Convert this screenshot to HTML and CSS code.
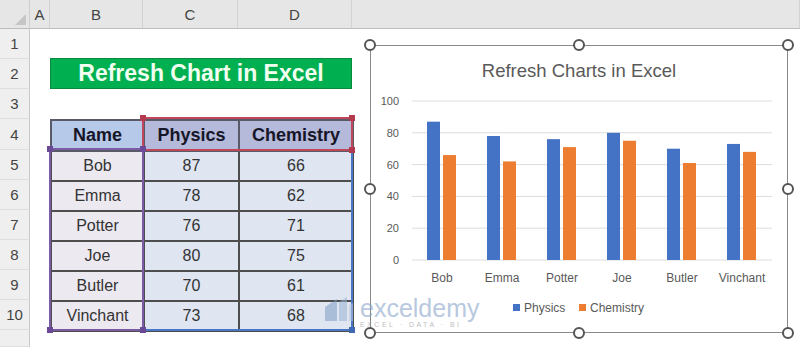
FILE: index.html
```html
<!doctype html>
<html lang="en">
<head>
    <meta charset="UTF-8">
    <meta name="viewport" content="width=device-width, initial-scale=1.0">
    <title>Refresh Chart in Excel</title>
    <link rel="stylesheet" href="styles.css">
</head>
<body>
<div class="sheet">
    <!-- column headers -->
    <div class="corner"></div>
    <div class="ch">A</div>
    <div class="ch">B</div>
    <div class="ch">C</div>
    <div class="ch">D</div>
    <div class="ch"></div>

    <!-- row headers -->
    <div class="rh">1</div>
    <div class="rh">2</div>
    <div class="rh">3</div>
    <div class="rh">4</div>
    <div class="rh">5</div>
    <div class="rh">6</div>
    <div class="rh">7</div>
    <div class="rh">8</div>
    <div class="rh">9</div>
    <div class="rh">10</div>
    <div class="rh"></div>

    <div class="title">Refresh Chart in Excel</div>

    <div class="data">
        <table>
            <colgroup><col class="c-b"><col class="c-c"><col class="c-d"></colgroup>
            <thead>
                <tr><th class="name">Name</th><th>Physics</th><th>Chemistry</th></tr>
            </thead>
            <tbody>
                <tr><td class="name">Bob</td><td>87</td><td>66</td></tr>
                <tr><td class="name">Emma</td><td>78</td><td>62</td></tr>
                <tr><td class="name">Potter</td><td>76</td><td>71</td></tr>
                <tr><td class="name">Joe</td><td>80</td><td>75</td></tr>
                <tr><td class="name">Butler</td><td>70</td><td>61</td></tr>
                <tr><td class="name">Vinchant</td><td>73</td><td>68</td></tr>
            </tbody>
        </table>
        <div class="sel sel-name"></div>
        <div class="sel sel-head"></div>
        <div class="sel sel-vals"></div>
        <span class="hd purple p1"></span>
        <span class="hd purple p2"></span>
        <span class="hd purple p3"></span>
        <span class="hd purple p4"></span>
        <span class="hd red r1"></span>
        <span class="hd red r2"></span>
        <span class="hd red r3"></span>
        <span class="hd blue b1"></span>
    </div>

    <div class="chart">
        <svg class="plot" width="418" height="288" viewBox="0 0 418 288">
            <text class="ctitle" x="209" y="32" text-anchor="middle">Refresh Charts in Excel</text>
            <g class="grid">
                <line x1="42" x2="402" y1="56" y2="56"/>
                <line x1="42" x2="402" y1="87.8" y2="87.8"/>
                <line x1="42" x2="402" y1="119.6" y2="119.6"/>
                <line x1="42" x2="402" y1="151.4" y2="151.4"/>
                <line x1="42" x2="402" y1="183.2" y2="183.2"/>
                <line x1="42" x2="402" y1="215" y2="215"/>
            </g>
            <g class="ylab" text-anchor="end">
                <text x="29" y="60">100</text>
                <text x="29" y="91.8">80</text>
                <text x="29" y="123.6">60</text>
                <text x="29" y="155.4">40</text>
                <text x="29" y="187.2">20</text>
                <text x="29" y="219">0</text>
            </g>
            <g class="phys">
                <rect x="57" y="76.67" width="13" height="138.33"/>
                <rect x="117" y="90.98" width="13" height="124.02"/>
                <rect x="177" y="94.16" width="13" height="120.84"/>
                <rect x="237" y="87.8" width="13" height="127.2"/>
                <rect x="297" y="103.7" width="13" height="111.3"/>
                <rect x="357" y="98.93" width="13" height="116.07"/>
            </g>
            <g class="chem">
                <rect x="73" y="110.06" width="13" height="104.94"/>
                <rect x="133" y="116.42" width="13" height="98.58"/>
                <rect x="193" y="102.11" width="13" height="112.89"/>
                <rect x="253" y="95.75" width="13" height="119.25"/>
                <rect x="313" y="118.01" width="13" height="96.99"/>
                <rect x="373" y="106.88" width="13" height="108.12"/>
            </g>
            <g class="xlab" text-anchor="middle">
                <text x="72" y="237">Bob</text>
                <text x="132" y="237">Emma</text>
                <text x="192" y="237">Potter</text>
                <text x="252" y="237">Joe</text>
                <text x="312" y="237">Butler</text>
                <text x="372" y="237">Vinchant</text>
            </g>
            <g class="legend">
                <rect class="phys" x="143" y="259" width="7" height="7"/>
                <text x="154" y="267">Physics</text>
                <rect class="chem" x="209" y="259" width="7" height="7"/>
                <text x="220" y="267">Chemistry</text>
            </g>
        </svg>
        <span class="knob k-tl"></span>
        <span class="knob k-tm"></span>
        <span class="knob k-tr"></span>
        <span class="knob k-ml"></span>
        <span class="knob k-mr"></span>
        <span class="knob k-bl"></span>
        <span class="knob k-bm"></span>
        <span class="knob k-br"></span>
    </div>

    <div class="mark">
        <svg width="30" height="26" viewBox="0 0 30 26">
            <path d="M1 25 L1 11 L13 3 L13 25 Z" fill="#7f9cc4"/>
            <path d="M15 25 L15 6 L23 1 L23 25 Z" fill="#9bb2d2"/>
            <path d="M25 25 L25 9 L29 7 L29 25 Z" fill="#b4c6de"/>
        </svg>
        <div class="mark-text">
            <div class="mark-name">exceldemy</div>
            <div class="mark-sub">EXCEL · DATA · BI</div>
        </div>
    </div>
</div>
</body>
</html>
```

FILE: styles.css
```css
* {
    box-sizing: border-box;
}
body {
    margin: 0;
    background: #fff;
    font-family: "Liberation Sans", Arial, sans-serif;
}
.sheet {
    position: relative;
    width: 800px;
    height: 347px;
    overflow: hidden;
    display: grid;
    grid-template-columns: 30px 20px 93px 95px 114px 1fr;
    grid-template-rows: 29px 30px 30px 30px 31px repeat(6, 30px) 1fr;
}

/* headers */
.corner {
    position: relative;
    background: #e6e6e6;
    border-right: 1px solid #cfcfcf;
    border-bottom: 1px solid #bdbdbd;
}
.corner::after {
    content: "";
    position: absolute;
    right: 3px;
    bottom: 3px;
    border-left: 11px solid transparent;
    border-bottom: 11px solid #c6c6c6;
}
.ch {
    background: #e6e6e6;
    border-right: 1px solid #d2d2d2;
    border-bottom: 1px solid #bdbdbd;
    display: flex;
    align-items: center;
    justify-content: center;
    font-size: 15px;
    color: #444;
}
.rh {
    grid-column: 1;
    background: #efefef;
    border-right: 1px solid #c8c8c8;
    border-bottom: 1px solid #dedede;
    display: flex;
    align-items: center;
    justify-content: center;
    font-size: 15px;
    color: #444;
}

/* title cell */
.title {
    grid-column: 3 / 6;
    grid-row: 3;
    margin-top: -1px;
    background: #00b050;
    border: 1px solid #0a8a3f;
    color: #f0fff0;
    font-size: 23px;
    font-weight: bold;
    display: flex;
    align-items: center;
    justify-content: center;
}

/* data table */
.data {
    grid-column: 3 / 6;
    grid-row: 5 / 12;
    position: relative;
}
.data table {
    width: 100%;
    height: 100%;
    border-collapse: collapse;
    table-layout: fixed;
}
.c-b { width: 93px; }
.c-c { width: 95px; }
.c-d { width: 114px; }
thead tr { height: 31px; }
tbody tr { height: 30px; }
th {
    font-size: 18px;
    font-weight: bold;
    color: #161628;
    background: #b5b9da;
    border: 2px solid #585a68;
    padding: 0;
}
th.name {
    background: #b6c9e8;
}
td {
    font-size: 16px;
    color: #333;
    text-align: center;
    background: #dfe6f2;
    border: 2px solid #4e4e4e;
    padding: 0;
}
td.name {
    background: #ece9f1;
}
.sel {
    position: absolute;
    pointer-events: none;
}
.sel-name {
    left: -1px;
    top: 29px;
    width: 95px;
    height: 183px;
    border: 2px solid #7b5aa6;
}
.sel-head {
    left: 92px;
    top: -2px;
    width: 211px;
    height: 34px;
    border: 2px solid #c0465a;
}
.sel-vals {
    left: 94px;
    top: 30px;
    width: 209px;
    height: 182px;
    border: 2px solid #4a76c6;
    border-left: none;
    border-top: none;
}
.hd {
    position: absolute;
    width: 6px;
    height: 6px;
    transform: translate(-50%, -50%);
}
.purple { background: #6a4a96; }
.red { background: #b23a4e; }
.blue { background: #3f68b4; }
.p1 { left: 0; top: 30px; }
.p2 { left: 93px; top: 30px; }
.p3 { left: 0; top: 211px; }
.p4 { left: 93px; top: 211px; }
.r1 { left: 93px; top: -1px; }
.r2 { left: 302px; top: -1px; }
.r3 { left: 302px; top: 31px; }
.b1 { left: 302px; top: 211px; }

/* chart */
.chart {
    position: absolute;
    left: 370px;
    top: 45px;
    width: 418px;
    height: 288px;
    background: #fff;
    outline: 1.5px solid #8a8a8a;
    outline-offset: -1px;
}
.plot {
    display: block;
    font-family: "Liberation Sans", Arial, sans-serif;
}
.ctitle {
    font-size: 18.5px;
    fill: #595959;
}
.grid line {
    stroke: #dcdcdc;
    stroke-width: 1;
}
.ylab text {
    font-size: 11px;
    fill: #595959;
}
.xlab text,
.legend text {
    font-size: 12px;
    fill: #595959;
}
.phys rect,
rect.phys {
    fill: #4472c4;
}
.chem rect,
rect.chem {
    fill: #ed7d31;
}
.knob {
    position: absolute;
    width: 12px;
    height: 12px;
    border: 2px solid #555;
    border-radius: 50%;
    background: #fff;
    transform: translate(-50%, -50%);
}
.k-tl { left: 0; top: 0; }
.k-tm { left: 50%; top: 0; }
.k-tr { left: 100%; top: 0; }
.k-ml { left: 0; top: 50%; }
.k-mr { left: 100%; top: 50%; }
.k-bl { left: 0; top: 100%; }
.k-bm { left: 50%; top: 100%; }
.k-br { left: 100%; top: 100%; }

/* watermark */
.mark {
    position: absolute;
    left: 324px;
    top: 296px;
    display: flex;
    align-items: flex-start;
    gap: 6px;
    opacity: 0.55;
    pointer-events: none;
}
.mark-name {
    font-size: 25px;
    line-height: 24px;
    color: #7f9cc4;
}
.mark-sub {
    font-size: 7px;
    letter-spacing: 2.5px;
    color: #8a8a8a;
    margin-top: 1px;
}
```
